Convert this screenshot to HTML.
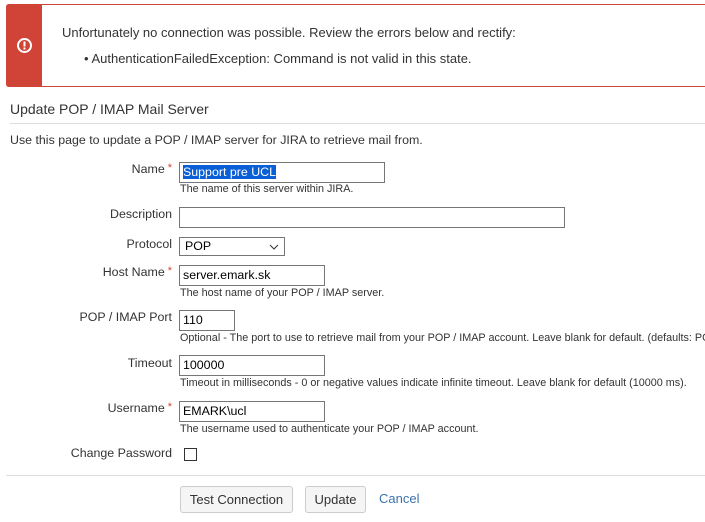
<!DOCTYPE html>
<html><head><style>
*{box-sizing:border-box;margin:0;padding:0}
body{width:705px;height:522px;overflow:hidden;background:#fff;font-family:"Liberation Sans",Arial,sans-serif;color:#333;position:relative;font-size:12.4px}
.a{position:absolute;white-space:nowrap}
.err{left:6px;top:4px;width:705px;height:83px;border:1px solid #d04437;border-radius:3px;}
.bar{left:6px;top:4px;width:36px;height:83px;background:#d04437;border-radius:3px 0 0 3px}
.lbl{right:533px;font-size:12.4px;color:#333}
.star{color:#d04437;font-size:11px;margin-left:3px;vertical-align:top}
.in{border:1px solid #767676;height:21px;font-size:12.4px;padding:2px 3px;color:#000;background:#fff}
.hint{font-size:10.8px;color:#333;left:180px}
.btn{border:1px solid #ccc;background:#f5f5f5;border-radius:3px;height:27px;font-size:13px;text-align:center;line-height:25px;color:#333}
</style></head><body>
<div class="a err"></div>
<div class="a bar"></div>
<svg class="a" style="left:16px;top:37px" width="17" height="17" viewBox="0 0 17 17"><circle cx="8.5" cy="8.5" r="6.5" fill="none" stroke="#fff" stroke-width="2"/><rect x="7.5" y="4.5" width="2" height="5" fill="#fff"/><rect x="7.5" y="10.5" width="2" height="2" fill="#fff"/></svg>
<div class="a" style="left:62px;top:25px;font-size:13px">Unfortunately no connection was possible. Review the errors below and rectify:</div>
<div class="a" style="left:84px;top:51px;font-size:13px">• AuthenticationFailedException: Command is not valid in this state.</div>
<div class="a" style="left:10px;top:101px;font-size:14px">Update POP / IMAP Mail Server</div>
<div class="a" style="left:10px;top:123px;width:695px;height:1px;background:#ddd"></div>
<div class="a" style="left:10px;top:133px">Use this page to update a POP / IMAP server for JIRA to retrieve mail from.</div>

<div class="a lbl" style="top:162px">Name<span class="star">*</span></div>
<div class="a in" style="left:179px;top:162px;width:206px"><span style="background:#0a5fd7;color:#fff">Support pre UCL</span></div>
<div class="a hint" style="top:183px">The name of this server within JIRA.</div>

<div class="a lbl" style="top:207px">Description</div>
<div class="a in" style="left:179px;top:207px;width:386px"></div>

<div class="a lbl" style="top:237px">Protocol</div>
<div class="a in" style="left:179px;top:237px;width:106px;height:19px;padding:1px 5px">POP<svg style="position:absolute;right:5px;top:6px" width="10" height="6"><path d="M1 1l4 4 4-4" fill="none" stroke="#333" stroke-width="1"/></svg></div>

<div class="a lbl" style="top:265px">Host Name<span class="star">*</span></div>
<div class="a in" style="left:179px;top:265px;width:146px">server.emark.sk</div>
<div class="a hint" style="top:287px">The host name of your POP / IMAP server.</div>

<div class="a lbl" style="top:310px">POP / IMAP Port</div>
<div class="a in" style="left:179px;top:310px;width:56px">110</div>
<div class="a hint" style="top:332px">Optional - The port to use to retrieve mail from your POP / IMAP account. Leave blank for default. (defaults: POP3 - 110)</div>

<div class="a lbl" style="top:356px">Timeout</div>
<div class="a in" style="left:179px;top:355px;width:146px">100000</div>
<div class="a hint" style="top:377px">Timeout in milliseconds - 0 or negative values indicate infinite timeout. Leave blank for default (10000 ms).</div>

<div class="a lbl" style="top:401px">Username<span class="star">*</span></div>
<div class="a in" style="left:179px;top:401px;width:146px">EMARK\ucl</div>
<div class="a hint" style="top:423px">The username used to authenticate your POP / IMAP account.</div>

<div class="a lbl" style="top:446px">Change Password</div>
<div class="a" style="left:184px;top:448px;width:13px;height:13px;border:1px solid #333"></div>

<div class="a" style="left:6px;top:475px;width:699px;height:1px;background:#ddd"></div>
<div class="a btn" style="left:180px;top:486px;width:113px">Test Connection</div>
<div class="a btn" style="left:305px;top:486px;width:61px">Update</div>
<div class="a" style="left:379px;top:491px;font-size:13px;color:#3b73af">Cancel</div>
</body></html>
